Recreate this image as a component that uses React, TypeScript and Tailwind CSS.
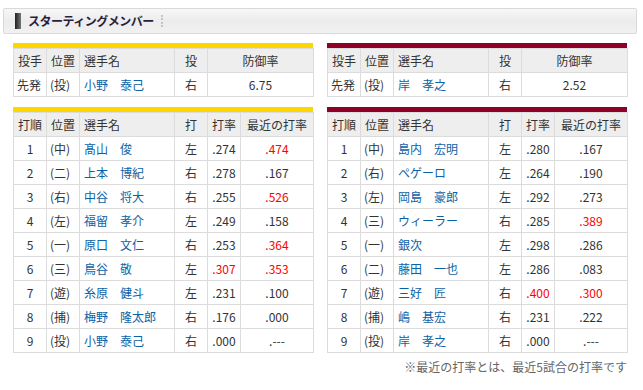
import React from 'react';

type Row = {
  order: string;
  pos: string;
  name: string;
  hand: string;
  avg: string;
  recent: string;
  avgHot?: boolean;
  recentHot?: boolean;
};

const tigers: Row[] = [
  { order: '1', pos: '中', name: '髙山　俊', hand: '左', avg: '.274', recent: '.474', recentHot: true },
  { order: '2', pos: '二', name: '上本　博紀', hand: '右', avg: '.278', recent: '.167' },
  { order: '3', pos: '右', name: '中谷　将大', hand: '右', avg: '.255', recent: '.526', recentHot: true },
  { order: '4', pos: '左', name: '福留　孝介', hand: '左', avg: '.249', recent: '.158' },
  { order: '5', pos: '一', name: '原口　文仁', hand: '右', avg: '.253', recent: '.364', recentHot: true },
  { order: '6', pos: '三', name: '鳥谷　敬', hand: '左', avg: '.307', recent: '.353', avgHot: true, recentHot: true },
  { order: '7', pos: '遊', name: '糸原　健斗', hand: '左', avg: '.231', recent: '.100' },
  { order: '8', pos: '捕', name: '梅野　隆太郎', hand: '右', avg: '.176', recent: '.000' },
  { order: '9', pos: '投', name: '小野　泰己', hand: '右', avg: '.000', recent: '.---' },
];

const eagles: Row[] = [
  { order: '1', pos: '中', name: '島内　宏明', hand: '左', avg: '.280', recent: '.167' },
  { order: '2', pos: '右', name: 'ペゲーロ', hand: '左', avg: '.264', recent: '.190' },
  { order: '3', pos: '左', name: '岡島　豪郎', hand: '左', avg: '.292', recent: '.273' },
  { order: '4', pos: '三', name: 'ウィーラー', hand: '右', avg: '.285', recent: '.389', recentHot: true },
  { order: '5', pos: '一', name: '銀次', hand: '左', avg: '.298', recent: '.286' },
  { order: '6', pos: '二', name: '藤田　一也', hand: '左', avg: '.286', recent: '.083' },
  { order: '7', pos: '遊', name: '三好　匠', hand: '右', avg: '.400', recent: '.300', avgHot: true, recentHot: true },
  { order: '8', pos: '捕', name: '嶋　基宏', hand: '右', avg: '.231', recent: '.222' },
  { order: '9', pos: '投', name: '岸　孝之', hand: '右', avg: '.000', recent: '.---' },
];

const th = 'h-[24px] border border-[#dcdcdc] bg-[#eeeeee] font-normal p-0';
const td = 'h-[24px] border border-[#dcdcdc] p-0';

const PitcherTable: React.FC<{ bar: string; name: string; era: string }> = ({ bar, name, era }) => (
  <div className="w-[300px]">
    <div className={`h-[5px] ${bar}`} />
    <table className="w-[300px] table-fixed border-collapse">
      <colgroup>
        <col className="w-[33px]" />
        <col className="w-[33px]" />
        <col className="w-[95px]" />
        <col className="w-[33px]" />
        <col className="w-[106px]" />
      </colgroup>
      <thead>
        <tr>
          <th className={`${th} text-left pl-[4px]`}>投手</th>
          <th className={`${th} text-left pl-[4px]`}>位置</th>
          <th className={`${th} text-left pl-[4px]`}>選手名</th>
          <th className={`${th} text-center`}>投</th>
          <th className={`${th} text-center`}>防御率</th>
        </tr>
      </thead>
      <tbody>
        <tr>
          <td className={`${td} pl-[3px]`}>先発</td>
          <td className={`${td} pl-[3px]`}>(投)</td>
          <td className={`${td} pl-[4px] text-[#0d62a6]`}>{name}</td>
          <td className={`${td} text-center`}>右</td>
          <td className={`${td} text-center`}>{era}</td>
        </tr>
      </tbody>
    </table>
  </div>
);

const BattingTable: React.FC<{ bar: string; rows: Row[] }> = ({ bar, rows }) => (
  <div className="w-[300px]">
    <div className={`h-[5px] ${bar}`} />
    <table className="w-[300px] table-fixed border-collapse">
      <colgroup>
        <col className="w-[33px]" />
        <col className="w-[33px]" />
        <col className="w-[95px]" />
        <col className="w-[33px]" />
        <col className="w-[33px]" />
        <col className="w-[73px]" />
      </colgroup>
      <thead>
        <tr>
          <th className={`${th} text-left pl-[4px]`}>打順</th>
          <th className={`${th} text-left pl-[4px]`}>位置</th>
          <th className={`${th} text-left pl-[4px]`}>選手名</th>
          <th className={`${th} text-center`}>打</th>
          <th className={`${th} text-center`}>打率</th>
          <th className={`${th} text-center`}>最近の打率</th>
        </tr>
      </thead>
      <tbody>
        {rows.map((r) => (
          <tr key={r.order}>
            <td className={`${td} text-center`}>{r.order}</td>
            <td className={`${td} pl-[3px]`}>({r.pos})</td>
            <td className={`${td} pl-[4px] text-[#0d62a6]`}>{r.name}</td>
            <td className={`${td} text-center`}>{r.hand}</td>
            <td className={`${td} text-center ${r.avgHot ? 'text-[#ff0000]' : ''}`}>{r.avg}</td>
            <td className={`${td} text-center ${r.recentHot ? 'text-[#ff0000]' : ''}`}>{r.recent}</td>
          </tr>
        ))}
      </tbody>
    </table>
  </div>
);

export default function App() {
  return (
    <div className="w-[643px] h-[390px] bg-white text-[#333333] text-[12px] leading-none font-['Noto_Sans_CJK_JP',sans-serif]">
      {/* title bar */}
      <div className="pt-[8px] px-[3px]">
        <div className="h-[26px] w-[634px] rounded-[2px] border border-[#d9d9d9] bg-gradient-to-b from-[#f7f7f7] via-[#ececec] to-[#f1f1f1] flex items-center pl-[11px]">
          <div className="w-[6px] h-[16px] bg-gradient-to-r from-[#222222] to-[#777777]" />
          <span className="ml-[7px] text-[12px] font-bold text-[#2a1e3c] tracking-[-0.5px]">スターティングメンバー</span>
          <div className="ml-[7px] h-[12px] border-l-[2px] border-dotted border-[#c4c4c4]" />
        </div>
      </div>

      <div className="flex gap-[14px] pl-[13px] pt-[9px]">
        <div className="flex flex-col gap-[10px]">
          <PitcherTable bar="bg-[#ffd700]" name="小野　泰己" era="6.75" />
          <BattingTable bar="bg-[#ffd700]" rows={tigers} />
        </div>
        <div className="flex flex-col gap-[10px]">
          <PitcherTable bar="bg-[#8e0026]" name="岸　孝之" era="2.52" />
          <BattingTable bar="bg-[#8e0026]" rows={eagles} />
          <p className="text-right text-[#666666] -mt-[2px]">※最近の打率とは、最近5試合の打率です</p>
        </div>
      </div>
    </div>
  );
}
